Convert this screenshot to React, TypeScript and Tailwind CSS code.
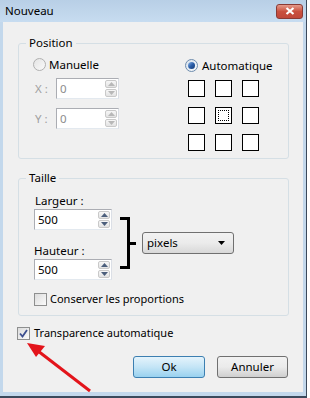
import React from "react";

const font = { fontFamily: '"Noto Sans", "Open Sans", sans-serif' };

function Arrow({ up, disabled }: { up: boolean; disabled?: boolean }) {
  return (
    <svg width="7" height="4" viewBox="0 0 7 4">
      {up ? (
        <polygon points="0,4 3.5,0 7,4" fill={disabled ? "#b8b8b8" : "#4c5f7c"} />
      ) : (
        <polygon points="0,0 3.5,4 7,0" fill={disabled ? "#b8b8b8" : "#4c5f7c"} />
      )}
    </svg>
  );
}

function SpinBtn({ up, disabled }: { up: boolean; disabled?: boolean }) {
  return (
    <div className="flex-1 flex items-center justify-center rounded-[2px] border border-[#c9c9c9] bg-gradient-to-b from-[#f7f7f7] to-[#e3e3e3]">
      <Arrow up={up} disabled={disabled} />
    </div>
  );
}

function Spin({ value, disabled, wide }: { value: string; disabled?: boolean; wide?: boolean }) {
  return (
    <div
      className={
        "flex h-[21px] items-stretch border border-[#abadb3] border-b-[#e3e9ef] border-r-[#dbdfe6] bg-white " +
        (wide ? "w-[78px]" : "w-[63px]")
      }
    >
      <div className={"flex-1 pl-[3px] text-[11.5px] leading-[19px] " + (disabled ? "text-[#8d8d8d]" : "text-black")}>
        {value}
      </div>
      <div className="flex w-[13px] flex-col gap-[1px] py-[1px] pr-[1px]">
        <SpinBtn up disabled={disabled} />
        <SpinBtn up={false} disabled={disabled} />
      </div>
    </div>
  );
}

function Radio({ checked, disabled }: { checked?: boolean; disabled?: boolean }) {
  return (
    <div
      className={
        "flex h-[13px] w-[13px] items-center justify-center rounded-full border " +
        (disabled ? "border-[#b0b0b0] bg-gradient-to-br from-[#e4e4e4] to-[#fafafa]" : "border-[#6e8cad] bg-gradient-to-br from-[#d9e2ec] to-[#f7f9fb]")
      }
    >
      {checked && (
        <div className="h-[7px] w-[7px] rounded-full bg-gradient-to-br from-[#8fb8e8] via-[#2a5da8] to-[#163b74]" />
      )}
    </div>
  );
}

function Check({ checked }: { checked?: boolean }) {
  return (
    <div className="flex h-[13px] w-[13px] items-center justify-center border border-[#8e8f8f] bg-gradient-to-br from-[#dcdcdc] to-[#fbfbfb]">
      {checked && (
        <svg width="9" height="9" viewBox="0 0 9 9">
          <path d="M1 4.5 L3.5 7.5 L8 1" stroke="#3d4f8f" strokeWidth="1.8" fill="none" />
        </svg>
      )}
    </div>
  );
}

function Group({ label, className, children }: { label: string; className: string; children: React.ReactNode }) {
  return (
    <div className={"relative rounded-[3px] border border-[#d5dfe5] " + className}>
      <div className="absolute -top-[9px] left-[7px] bg-[#f0f0f0] px-[3px] text-[11.5px] leading-[16px] text-black">
        {label}
      </div>
      {children}
    </div>
  );
}

function Sq({ dotted }: { dotted?: boolean }) {
  return (
    <div className="flex h-[17px] w-[17px] items-center justify-center border border-black bg-white">
      {dotted && <div className="h-[11px] w-[11px] border border-dotted border-black" />}
    </div>
  );
}

export default function App() {
  return (
    <div className="relative h-[398px] w-[310px] bg-white text-[11px]" style={font}>
      <div className="flex h-[398px] w-[307px] flex-col border-r border-b-2 border-[#3b4a5c] bg-[#c3d8ec]">
        {/* Title bar */}
        <div className="flex h-[22px] items-center justify-between bg-gradient-to-b from-[#b8cfe6] to-[#c7dcf0] pl-[5px] pr-[3px]">
          <span className="text-[11.5px] text-black">Nouveau</span>
          <div className="flex h-[15px] w-[27px] items-center justify-center rounded-[3px] border border-[#8a3a35] bg-gradient-to-b from-[#e49a8c] via-[#c9503f] to-[#c0473a]">
            <svg width="10" height="8" viewBox="0 0 10 8">
              <path d="M1.5 1 L8.5 7 M8.5 1 L1.5 7" stroke="white" strokeWidth="2.2" />
            </svg>
          </div>
        </div>
        {/* Body */}
        <div className="mx-[3px] mb-[4px] flex flex-1 flex-col bg-[#f0f0f0] pt-[21px]">
          <Group label="Position" className="ml-[15px] mr-[14px] h-[116px]">
            <div className="flex pt-[14px]">
              <div className="flex w-[151px] flex-col pl-[14px]">
                <div className="flex h-[13px] items-center gap-[3px]">
                  <Radio disabled />
                  <span className="text-[11.5px] text-black">Manuelle</span>
                </div>
                <div className="mt-[7px] flex items-center">
                  <span className="w-[23px] pl-[2px] text-[11.5px] text-[#a0a0a0]">X :</span>
                  <Spin value="0" disabled />
                </div>
                <div className="mt-[9px] flex items-center">
                  <span className="w-[23px] pl-[2px] text-[11.5px] text-[#a0a0a0]">Y :</span>
                  <Spin value="0" disabled />
                </div>
              </div>
              <div className="flex flex-col pl-[15px]">
                <div className="mt-[1px] flex h-[13px] items-center gap-[4px]">
                  <Radio checked />
                  <span className="text-[11.5px] text-black">Automatique</span>
                </div>
                <div className="ml-[3px] mt-[8px] grid w-[71px] grid-cols-3 gap-[10px]">
                  <Sq />
                  <Sq />
                  <Sq />
                  <Sq />
                  <Sq dotted />
                  <Sq />
                  <Sq />
                  <Sq />
                  <Sq />
                </div>
              </div>
            </div>
          </Group>

          <Group label="Taille" className="ml-[15px] mr-[14px] mt-[19px] h-[138px]">
            <div className="flex flex-col pl-[15px] pt-[14px]">
              <div className="flex">
                <div className="flex flex-col">
                  <span className="pl-[1px] text-[11.5px] leading-[16px] text-black">Largeur :</span>
                  <div>
                    <Spin value="500" wide />
                  </div>
                  <span className="mt-[13px] text-[11.5px] leading-[16px] text-black">Hauteur :</span>
                  <div>
                    <Spin value="500" wide />
                  </div>
                </div>
                <div className="ml-[8px] mt-[24px] flex items-center self-start">
                  <div className="h-[52px] w-[10px] border-y-[3px] border-r-[3px] border-black" />
                  <div className="h-[3px] w-[6px] bg-black" />
                  <div className="ml-[6px] flex h-[22px] w-[92px] items-center justify-between rounded-[3px] border border-[#707070] bg-gradient-to-b from-[#f2f2f2] via-[#ebebeb] to-[#d8d8d8] pl-[4px] pr-[8px]">
                    <span className="text-[11.5px] text-black">pixels</span>
                    <svg width="7" height="4" viewBox="0 0 7 4">
                      <polygon points="0,0 3.5,4 7,0" fill="black" />
                    </svg>
                  </div>
                </div>
              </div>
              <div className="mt-[11px] flex items-center gap-[3px]">
                <Check />
                <span className="text-[11px] text-black">Conserver les proportions</span>
              </div>
            </div>
          </Group>

          <div className="ml-[14px] mt-[9px] flex items-center gap-[4px]">
            <Check checked />
            <span className="text-[11px] text-black">Transparence automatique</span>
          </div>

          <div className="mt-[14px] flex gap-[12px] pl-[130px]">
            <div className="flex h-[22px] w-[72px] items-center justify-center rounded-[3px] border border-[#3c7fb1] bg-gradient-to-b from-[#e5f4fc] via-[#c4e5f6] to-[#98d1ef] text-[11.5px] text-black">
              Ok
            </div>
            <div className="flex h-[22px] w-[71px] items-center justify-center rounded-[3px] border border-[#707070] bg-gradient-to-b from-[#f2f2f2] via-[#ebebeb] to-[#cfcfcf] text-[11.5px] text-black">
              Annuler
            </div>
          </div>
        </div>
      </div>
      {/* red arrow annotation */}
      <svg className="absolute left-0 top-0" width="310" height="398" viewBox="0 0 310 398">
        <line x1="90" y1="391" x2="38" y2="351" stroke="#e3141b" strokeWidth="3" />
        <polygon points="27,343 45,346 36,357" fill="#e3141b" />
      </svg>
    </div>
  );
}
